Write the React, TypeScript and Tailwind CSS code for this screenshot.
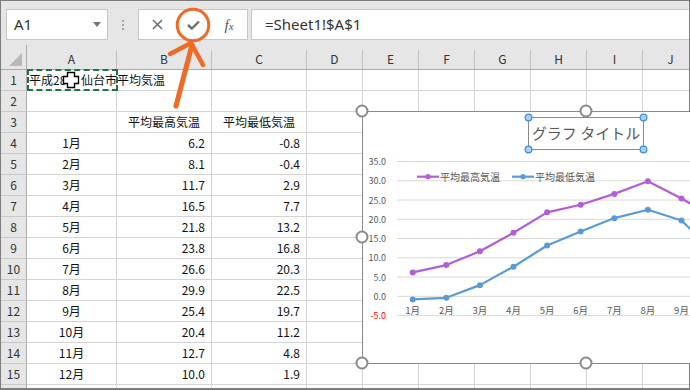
import React from 'react'

const high = [6.2, 8.1, 11.7, 16.5, 21.8, 23.8, 26.6, 29.9, 25.4, 20.4, 12.7, 10.0]
const low = [-0.8, -0.4, 2.9, 7.7, 13.2, 16.8, 20.3, 22.5, 19.7, 11.2, 4.8, 1.9]
const cols = ['A', 'B', 'C', 'D', 'E', 'F', 'G', 'H', 'I', 'J']
const jp = { fontFamily: '"Noto Sans CJK JP", "Noto Sans", sans-serif' }

// chart coords (local to chart inner box)
const px = (i: number) => 49.7 + 33.6 * i
const py = (v: number) => 184.3 - 3.85 * v

function Cell({ children, align = 'center' }: { children?: React.ReactNode; align?: 'left' | 'center' | 'right' }) {
  const a = align === 'left' ? 'justify-start pl-[2px]' : align === 'right' ? 'justify-end pr-[6px]' : 'justify-center'
  return (
    <div className={`flex h-[21px] items-center whitespace-nowrap border-b border-r border-[#d4d4d4] text-[12px] text-[#111] ${a}`}>
      {children}
    </div>
  )
}

function Row({ n, a, b, c }: { n?: number; a?: React.ReactNode; b?: React.ReactNode; c?: React.ReactNode }) {
  return (
    <>
      <div className="flex h-[21px] items-center justify-center border-b border-r border-b-[#c8c8c8] border-r-[#ababab] bg-[#e6e6e6] text-[12px] text-[#333]">{n}</div>
      <Cell>{a}</Cell>
      <Cell align={n === 3 ? 'center' : 'right'}>{b}</Cell>
      <Cell align={n === 3 ? 'center' : 'right'}>{c}</Cell>
      {cols.slice(3).map(k => <Cell key={k} />)}
    </>
  )
}

function Chart() {
  const grid = [35, 30, 25, 20, 15, 10, 5, 0, -5]
  const line = (d: number[]) => d.map((v, i) => `${i ? 'L' : 'M'}${px(i).toFixed(1)} ${py(v).toFixed(1)}`).join(' ')
  return (
    <div className="absolute left-[362px] top-[111px] h-[253px] w-[400px] border border-[#8a8a8a] bg-white" style={jp}>
      <svg width="400" height="251" className="block">
        {grid.map(g => (
          <g key={g}>
            <line x1="34" x2="400" y1={py(g)} y2={py(g)} stroke="#d9d9d9" strokeWidth="1" />
            <text x="23" y={py(g) + 3.5} fontSize="9" textAnchor="end" fill={g < 0 ? '#ff0000' : '#595959'}>{g.toFixed(1)}</text>
          </g>
        ))}
        {high.slice(0, 9).map((_, i) => (
          <text key={i} x={px(i)} y="202" fontSize="9.5" textAnchor="middle" fill="#595959">{i + 1}月</text>
        ))}
        <path d={line(high)} fill="none" stroke="#b25fd6" strokeWidth="2.2" strokeLinejoin="round" />
        <path d={line(low)} fill="none" stroke="#5b9bd5" strokeWidth="2.2" strokeLinejoin="round" />
        {high.map((v, i) => <circle key={'h' + i} cx={px(i)} cy={py(v)} r="3" fill="#b25fd6" />)}
        {low.map((v, i) => <circle key={'l' + i} cx={px(i)} cy={py(v)} r="3" fill="#5b9bd5" />)}
        <line x1="54" x2="76" y1="64.7" y2="64.7" stroke="#b25fd6" strokeWidth="2.2" />
        <circle cx="65" cy="64.7" r="2.6" fill="#b25fd6" />
        <text x="77" y="68.5" fontSize="10" fill="#595959">平均最高気温</text>
        <line x1="149" x2="171" y1="64.7" y2="64.7" stroke="#5b9bd5" strokeWidth="2.2" />
        <circle cx="160" cy="64.7" r="2.6" fill="#5b9bd5" />
        <text x="172" y="68.5" fontSize="10" fill="#595959">平均最低気温</text>
        <rect x="165.5" y="5.5" width="115" height="32" fill="white" stroke="#8a8a8a" strokeWidth="1" />
        <text x="223" y="27" fontSize="15" textAnchor="middle" fill="#595959">グラフ タイトル</text>
        {[[165.5, 5.5], [280.5, 5.5], [165.5, 37.5], [280.5, 37.5]].map(([x, y], i) => (
          <circle key={i} cx={x} cy={y} r="3.4" fill="#a8d1f5" stroke="#3b8fd9" strokeWidth="1.2" />
        ))}
      </svg>
    </div>
  )
}

export default function App() {
  return (
    <div className="relative h-[390px] w-[690px] overflow-hidden bg-white">
      <div className="h-full w-full overflow-hidden border border-b-2 border-[#7d7d7d]" style={jp}>
        {/* formula bar */}
        <div className="flex h-[44px] items-start bg-[#e6e6e6] pt-[8px]">
          <div className="ml-[5px] flex h-[31px] w-[102px] items-center justify-between border border-[#c6c6c6] bg-white pl-[7px] pr-[6px]">
            <span className="text-[15px] text-[#333]" style={{ fontFamily: '"Noto Sans", sans-serif' }}>A1</span>
            <svg width="8" height="5"><path d="M0 0 L8 0 L4 5 Z" fill="#777" /></svg>
          </div>
          <div className="flex h-[31px] w-[30px] flex-col items-center justify-center gap-[2px]">
            <div className="h-[2px] w-[2px] bg-[#a5a5a5]" />
            <div className="h-[2px] w-[2px] bg-[#a5a5a5]" />
            <div className="h-[2px] w-[2px] bg-[#a5a5a5]" />
          </div>
          <div className="flex h-[31px] w-[110px] items-center border border-[#c6c6c6] bg-white">
            <div className="flex w-[36px] justify-center">
              <svg width="11" height="11"><path d="M1 1 L10 10 M10 1 L1 10" stroke="#6f6f6f" strokeWidth="1.6" /></svg>
            </div>
            <div className="flex w-[36px] justify-center">
              <svg width="13" height="10"><path d="M1 5 L4.8 8.5 L12 1.5" fill="none" stroke="#6f6f6f" strokeWidth="2.4" /></svg>
            </div>
            <div className="flex w-[36px] justify-center">
              <span className="italic text-[#555]" style={{ fontFamily: '"Liberation Serif", serif' }}>
                <span className="text-[15px]">f</span><span className="text-[11px]">x</span>
              </span>
            </div>
          </div>
          <div className="ml-[3px] flex h-[31px] flex-1 items-center border border-r-0 border-[#c6c6c6] bg-white pl-[13px]">
            <span className="text-[15px] text-[#333]" style={{ fontFamily: '"Noto Sans", sans-serif' }}>=Sheet1!$A$1</span>
          </div>
        </div>

        {/* sheet grid */}
        <div className="grid grid-cols-[26px_90px_95px_95px_56px_56px_56px_56px_56px_56px_56px]">
          <div className="flex h-[25px] items-end justify-end border-b border-r border-[#ababab] bg-[#e6e6e6] pb-[3px] pr-[4px]">
            <svg width="13" height="13"><path d="M13 0 L13 13 L0 13 Z" fill="#b8b8b8" /></svg>
          </div>
          {cols.map(k => (
            <div key={k} className="flex h-[25px] border-b border-[#ababab] bg-[#e6e6e6]">
              <div className="flex flex-1 items-center justify-center pt-[4px] text-[12px] text-[#333]">{k}</div>
              <div className="h-[19px] w-px self-end bg-[#c0c0c0]" />
            </div>
          ))}

          <div className="flex h-[21px] items-center justify-center border-b border-r border-b-[#c8c8c8] border-r-[#ababab] bg-[#e6e6e6] text-[12px] text-[#333]">1</div>
          <div className="relative flex h-[21px] items-center whitespace-nowrap border-b border-r border-[#d4d4d4] pl-[2px] text-[12px] text-[#111]">
            平成28年 仙台市平均気温
            <div className="absolute left-0 top-[-1px] h-[22px] w-[91px] border-2 border-dashed border-[#217346]" />
          </div>
          {cols.slice(1).map(k => <Cell key={k} />)}

          <Row n={2} />
          <Row n={3} b="平均最高気温" c="平均最低気温" />
          {high.map((h, i) => (
            <Row key={i} n={i + 4} a={`${i + 1}月`} b={h.toFixed(1)} c={low[i].toFixed(1)} />
          ))}
          <Row />
        </div>
      </div>

      <Chart />

      {/* overlays: handles, cursor, annotation */}
      <svg className="pointer-events-none absolute left-0 top-0" width="690" height="390">
        {[[362, 111], [586, 111], [362, 237], [362, 363], [586, 363]].map(([x, y], i) => (
          <circle key={i} cx={x} cy={y} r="5.5" fill="white" stroke="#8a8a8a" strokeWidth="2" />
        ))}
        <path d="M67.5 72.5 H74.5 V76.5 H78.5 V83.5 H74.5 V87.5 H67.5 V83.5 H63.5 V76.5 H67.5 Z" fill="white" stroke="#000" strokeWidth="1.4" />
        <circle cx="193" cy="25" r="15.8" fill="none" stroke="#ef6b25" strokeWidth="3" />
        <path d="M192 45 L176 106" stroke="#ef6b25" strokeWidth="5" strokeLinecap="round" />
        <path d="M170 54 L191 43 L203 65" fill="none" stroke="#ef6b25" strokeWidth="4.5" strokeLinecap="round" strokeLinejoin="round" />
      </svg>
    </div>
  )
}
